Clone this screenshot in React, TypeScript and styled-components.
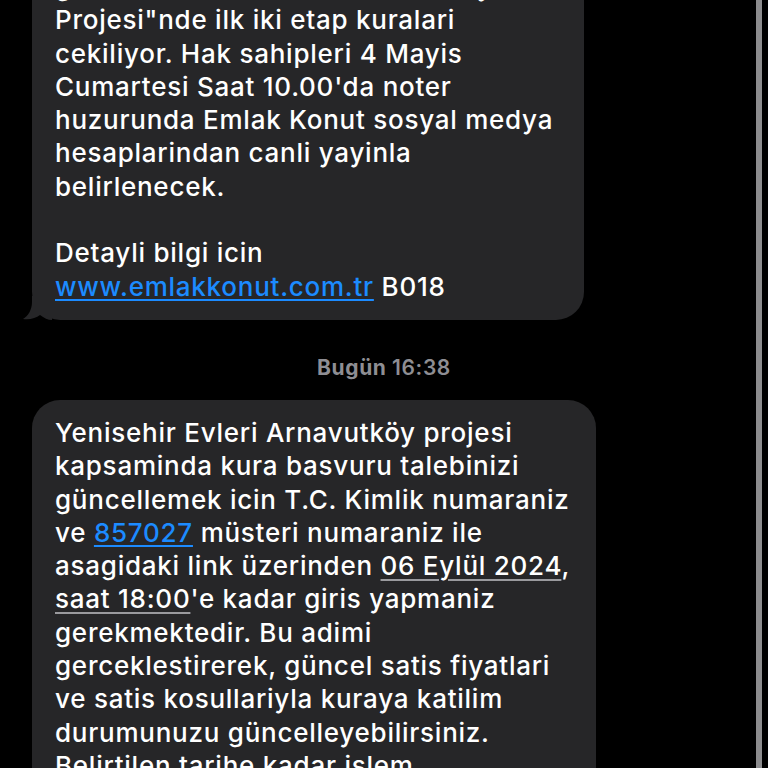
import styled, { createGlobalStyle } from "styled-components"

const GlobalStyle = createGlobalStyle`
  html, body {
    margin: 0;
    padding: 0;
    background: #000;
    overflow: hidden;
  }
  body {
    font-family: Inter, "Noto Sans", "Liberation Sans", sans-serif;
    -webkit-font-smoothing: antialiased;
  }
`

const Screen = styled.div`
  display: flex;
  width: 100vw;
  height: 100vh;
  overflow: hidden;
  background: #000;
`

const Thread = styled.div`
  flex: 1;
  min-width: 0;
  display: flex;
  flex-direction: column;
  margin-top: -46px;
  padding-left: 32px;
`

type BubbleProps = {
  width: number
}

const Bubble = styled.div<BubbleProps>`
  position: relative;
  box-sizing: border-box;
  width: ${(p) => p.width}px;
  padding: 16px 16px 17px 23px;
  background: #262628;
  border-radius: 28px;
  color: #fff;
  font-size: 26px;
  line-height: 33.3px;
  letter-spacing: 0.75px;
  font-weight: 500;
`

const Tail = styled.svg`
  position: absolute;
  left: -10px;
  bottom: 0;
  width: 30px;
  height: 24px;
`

const Line = styled.div`
  white-space: nowrap;
  min-height: 33.3px;
`

const Link = styled.span`
  color: #1c8bff;
  text-decoration: underline;
  text-decoration-thickness: 2px;
  text-underline-offset: 3px;
`

const DateMark = styled.span`
  text-decoration: underline;
  text-decoration-color: #9a9a9e;
  text-decoration-thickness: 2px;
  text-underline-offset: 4px;
`

const Stamp = styled.div`
  margin: 36px 0 20px 0;
  width: 704px;
  text-align: center;
  font-size: 21px;
  line-height: 24px;
  letter-spacing: 0.6px;
  color: #8e8e93;
  font-weight: 700;

  span {
    font-weight: 600;
  }
`

const ScrollIndicator = styled.div`
  flex: 0 0 6px;
  width: 6px;
  height: 100%;
  margin-right: 6px;
  background: #8c8c8e;
`

function App() {
  return (
    <Screen>
      <GlobalStyle />
      <Thread>
        <Bubble width={552}>
          <Line>gelistirilen "Yenisehir Arnavutköy</Line>
          <Line>Projesi"nde ilk iki etap kuralari</Line>
          <Line>cekiliyor. Hak sahipleri 4 Mayis</Line>
          <Line>Cumartesi Saat 10.00'da noter</Line>
          <Line>huzurunda Emlak Konut sosyal medya</Line>
          <Line>hesaplarindan canli yayinla</Line>
          <Line>belirlenecek.</Line>
          <Line />
          <Line>Detayli bilgi icin</Line>
          <Line>
            <Link>www.emlakkonut.com.tr</Link> B018
          </Line>
          <Tail viewBox="0 0 30 24">
            <path d="M10 0 L10 6 C10 14 6 20 1 23 C8 24 14 22 18 19 C22 22 26 24 30 24 L30 0 Z" fill="#262628" />
          </Tail>
        </Bubble>

        <Stamp>
          Bugün <span>16:38</span>
        </Stamp>

        <Bubble width={564}>
          <Line>Yenisehir Evleri Arnavutköy projesi</Line>
          <Line>kapsaminda kura basvuru talebinizi</Line>
          <Line>güncellemek icin T.C. Kimlik numaraniz</Line>
          <Line>
            ve <Link>857027</Link> müsteri numaraniz ile
          </Line>
          <Line>
            asagidaki link üzerinden <DateMark>06 Eylül 2024</DateMark>,
          </Line>
          <Line>
            <DateMark>saat 18:00</DateMark>'e kadar giris yapmaniz
          </Line>
          <Line>gerekmektedir. Bu adimi</Line>
          <Line>gerceklestirerek, güncel satis fiyatlari</Line>
          <Line>ve satis kosullariyla kuraya katilim</Line>
          <Line>durumunuzu güncelleyebilirsiniz.</Line>
          <Line>Belirtilen tarihe kadar islem</Line>
          <Line>yapmayan basvuru sahipleri</Line>
        </Bubble>
      </Thread>
      <ScrollIndicator />
    </Screen>
  )
}

export default App
